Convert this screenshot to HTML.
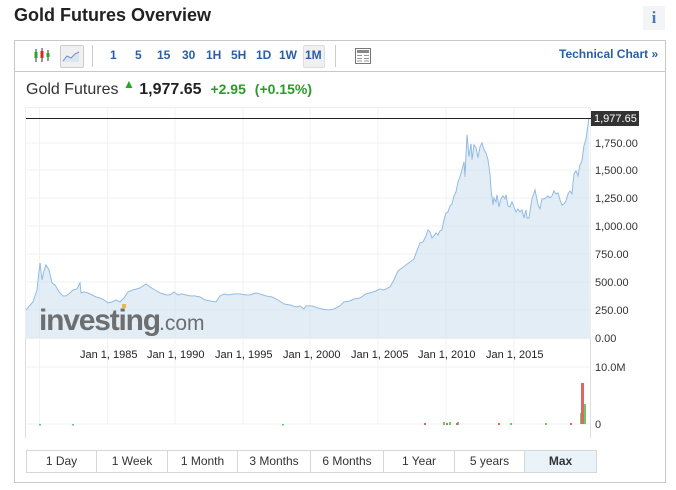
<!DOCTYPE html>
<html><head><meta charset="utf-8"><style>
body{margin:0;width:676px;height:490px;background:#fff;font-family:"Liberation Sans",Arial,sans-serif;position:relative;overflow:hidden}
.a{position:absolute}
h1{position:absolute;left:14px;top:5px;margin:0;font-size:18px;font-weight:bold;color:#222}
.info{left:643px;top:6px;width:22px;height:24px;background:#f2f4f6;color:#4a7ab8;font:bold 17px "Liberation Serif",serif;text-align:center;line-height:24px}
.box{left:14px;top:40px;width:650px;height:441px;border:1px solid #c8c8c8}
.tb{left:15px;top:41px;width:650px;height:30px;border-bottom:1px solid #c8c8c8}
.t{top:48px;font-size:12px;font-weight:bold;color:#2a5fa8}
.btns{left:26px;top:450px;display:flex;border:1px solid #d6d6d6}
.btns div{height:21px;line-height:21px;text-align:center;font-size:12px;color:#333;border-right:1px solid #d6d6d6}
.btns div:last-child{border-right:none}
</style></head><body>
<h1>Gold Futures Overview</h1>
<div class="a info">i</div>
<div class="a box"></div>
<div class="a tb"></div>
<svg class="a" style="left:33px;top:47px" width="18" height="18"><g stroke="#333" stroke-width="1"><line x1="3" y1="2" x2="3" y2="15"/><line x1="9" y1="1" x2="9" y2="15"/><line x1="15" y1="3" x2="15" y2="14"/></g><rect x="1.5" y="5" width="3" height="6" fill="#2a2" /><rect x="7.5" y="4" width="3" height="7" fill="#d22"/><rect x="13.5" y="6" width="3" height="4" fill="#2a2"/></svg>
<div class="a" style="left:60px;top:45px;width:22px;height:21px;background:#f0f0f0;border:1px solid #ccc;border-radius:2px"></div>
<svg class="a" style="left:62px;top:49px" width="18" height="14"><path d="M1 12 L5 7 L9 9 L13 5 L17 3 L17 13 L1 13Z" fill="#dbe6f3"/><path d="M1 12 L5 7 L9 9 L13 5 L17 3" stroke="#6b8fc4" fill="none"/></svg>
<div class="a" style="left:92px;top:45px;width:1px;height:22px;background:#ccc"></div>
<div class="a t" style="left:110px">1</div>
<div class="a t" style="left:135px">5</div>
<div class="a t" style="left:157px">15</div>
<div class="a t" style="left:182px">30</div>
<div class="a t" style="left:206px">1H</div>
<div class="a t" style="left:231px">5H</div>
<div class="a t" style="left:256px">1D</div>
<div class="a t" style="left:279px">1W</div>
<div class="a" style="left:303px;top:45px;width:20px;height:21px;background:#f0f0f0;border:1px solid #ddd;border-radius:2px"></div>
<div class="a t" style="left:305px">1M</div>
<div class="a" style="left:335px;top:45px;width:1px;height:22px;background:#ccc"></div>
<svg class="a" style="left:355px;top:48px" width="16" height="16"><rect x="0.5" y="0.5" width="15" height="15" fill="#fff" stroke="#777"/><rect x="2" y="2" width="12" height="3" fill="#888"/><g stroke="#999"><line x1="2" y1="7.5" x2="7" y2="7.5"/><line x1="2" y1="10.5" x2="7" y2="10.5"/><line x1="2" y1="13" x2="7" y2="13"/><line x1="9" y1="7.5" x2="14" y2="7.5"/><line x1="9" y1="10.5" x2="14" y2="10.5"/><line x1="9" y1="13" x2="14" y2="13"/></g></svg>
<div class="a" style="left:559px;top:47px;font-size:12px;font-weight:bold;color:#2a5fa8">Technical Chart »</div>
<div class="a" style="left:26px;top:81px;font-size:16px;color:#333;white-space:nowrap">Gold Futures <span style="color:#2a2;font-size:12px;position:relative;top:-6px">&#9650;</span> <b style="color:#222">1,977.65</b> &nbsp;<b style="color:#2a9a2a;font-size:14px">+2.95</b> &nbsp;<b style="color:#2a9a2a;font-size:14px">(+0.15%)</b></div>
<svg class="a" style="left:0;top:0" width="676" height="490">
<rect x="25.5" y="107.5" width="565" height="231" fill="#fff" stroke="#eee"/>
<g stroke="#f2f2f2"><line x1="39.5" y1="108" x2="39.5" y2="424"/><line x1="107.5" y1="108" x2="107.5" y2="424"/><line x1="175" y1="108" x2="175" y2="424"/><line x1="243" y1="108" x2="243" y2="424"/><line x1="310" y1="108" x2="310" y2="424"/><line x1="378" y1="108" x2="378" y2="424"/><line x1="446" y1="108" x2="446" y2="424"/><line x1="514" y1="108" x2="514" y2="424"/>
<line x1="26" y1="143" x2="590" y2="143"/><line x1="26" y1="170" x2="590" y2="170"/><line x1="26" y1="198" x2="590" y2="198"/><line x1="26" y1="226" x2="590" y2="226"/><line x1="26" y1="254" x2="590" y2="254"/><line x1="26" y1="282" x2="590" y2="282"/><line x1="26" y1="310" x2="590" y2="310"/><line x1="26" y1="367" x2="590" y2="367"/><line x1="26" y1="424" x2="590" y2="424"/></g>
<path id="p" d="M26,310 L33,302 L37,290 L40,263 L42,280 L44,271 L46,265 L49,270 L52,283 L55,285 L59,292 L63,296 L66,296 L70,293 L73,290 L77,289 L80,283 L81,293 L84,292 L88,293 L92,295 L96,297 L100,298 L104,300 L108,303 L112,302 L116,300 L120,302 L124,298 L128,292 L133,290 L140,288 L146,284 L150,287 L155,290 L160,293 L166,295 L170,295 L174,292 L178,295 L182,294 L186,295 L190,296 L195,296 L200,297 L205,300 L210,301 L216,302 L220,296 L224,294 L228,295 L234,294 L240,294 L246,295 L250,295 L256,293 L260,294 L266,296 L272,297 L278,300 L284,304 L290,305 L296,307 L300,306 L304,309 L306,306 L312,306 L318,308 L322,309 L328,310 L334,309 L340,306 L344,302 L350,301 L354,299 L360,298 L366,294 L370,293 L376,291 L380,289 L384,290 L390,287 L394,280 L398,271 L402,268 L406,265 L410,262 L414,259 L418,248 L420,243 L423,242 L426,236 L428,230 L430,232 L432,238 L434,236 L436,233 L438,235 L440,231 L442,230 L444,220 L446,213 L448,212 L450,206 L452,204 L454,196 L456,192 L458,182 L460,177 L462,170 L464,162 L465,177 L467,135 L469,157 L471,144 L472,160 L474,145 L476,148 L478,158 L480,147 L482,143 L484,150 L486,153 L488,160 L490,175 L491,190 L493,205 L494,198 L496,202 L497,195 L499,207 L501,199 L503,196 L505,199 L506,195 L508,206 L510,207 L512,202 L514,207 L516,212 L518,209 L520,212 L522,210 L524,218 L526,210 L527,218 L529,218 L532,199 L534,193 L535,190 L537,200 L538,205 L540,209 L542,199 L544,199 L546,198 L548,196 L550,198 L552,196 L554,191 L556,194 L558,193 L560,200 L562,205 L564,204 L566,201 L568,194 L570,191 L572,194 L574,174 L576,171 L578,176 L580,165 L582,161 L584,146 L586,139 L588,125 L589,118" fill="none" stroke="#7fb0e0" stroke-width="1"/>
<path d="M26,338 L26,310 L33,302 L37,290 L40,263 L42,280 L44,271 L46,265 L49,270 L52,283 L55,285 L59,292 L63,296 L66,296 L70,293 L73,290 L77,289 L80,283 L81,293 L84,292 L88,293 L92,295 L96,297 L100,298 L104,300 L108,303 L112,302 L116,300 L120,302 L124,298 L128,292 L133,290 L140,288 L146,284 L150,287 L155,290 L160,293 L166,295 L170,295 L174,292 L178,295 L182,294 L186,295 L190,296 L195,296 L200,297 L205,300 L210,301 L216,302 L220,296 L224,294 L228,295 L234,294 L240,294 L246,295 L250,295 L256,293 L260,294 L266,296 L272,297 L278,300 L284,304 L290,305 L296,307 L300,306 L304,309 L306,306 L312,306 L318,308 L322,309 L328,310 L334,309 L340,306 L344,302 L350,301 L354,299 L360,298 L366,294 L370,293 L376,291 L380,289 L384,290 L390,287 L394,280 L398,271 L402,268 L406,265 L410,262 L414,259 L418,248 L420,243 L423,242 L426,236 L428,230 L430,232 L432,238 L434,236 L436,233 L438,235 L440,231 L442,230 L444,220 L446,213 L448,212 L450,206 L452,204 L454,196 L456,192 L458,182 L460,177 L462,170 L464,162 L465,177 L467,135 L469,157 L471,144 L472,160 L474,145 L476,148 L478,158 L480,147 L482,143 L484,150 L486,153 L488,160 L490,175 L491,190 L493,205 L494,198 L496,202 L497,195 L499,207 L501,199 L503,196 L505,199 L506,195 L508,206 L510,207 L512,202 L514,207 L516,212 L518,209 L520,212 L522,210 L524,218 L526,210 L527,218 L529,218 L532,199 L534,193 L535,190 L537,200 L538,205 L540,209 L542,199 L544,199 L546,198 L548,196 L550,198 L552,196 L554,191 L556,194 L558,193 L560,200 L562,205 L564,204 L566,201 L568,194 L570,191 L572,194 L574,174 L576,171 L578,176 L580,165 L582,161 L584,146 L586,139 L588,125 L589,118 L590,338Z" fill="#c8dbee" fill-opacity="0.5"/>
<line x1="26" y1="118.5" x2="591" y2="118.5" stroke="#222" stroke-width="1"/>
<rect x="591" y="111" width="48" height="15" fill="#333"/>
<text x="594" y="122" font-size="11" fill="#fff" font-family="Liberation Sans">1,977.65</text>
<g font-size="11" fill="#333" font-family="Liberation Sans"><text x="595" y="147">1,750.00</text><text x="595" y="174">1,500.00</text><text x="595" y="202">1,250.00</text><text x="595" y="230">1,000.00</text><text x="595" y="258">750.00</text><text x="595" y="286">500.00</text><text x="595" y="314">250.00</text><text x="595" y="342">0.00</text><text x="595" y="371">10.0M</text><text x="595" y="428">0</text></g>
<line x1="590.5" y1="338" x2="590.5" y2="438" stroke="#ddd"/>
<line x1="25.5" y1="338" x2="25.5" y2="438" stroke="#ddd"/>
<g font-size="11" fill="#222" font-family="Liberation Sans"><text x="80" y="358">Jan 1, 1985</text><text x="147" y="358">Jan 1, 1990</text><text x="215" y="358">Jan 1, 1995</text><text x="283" y="358">Jan 1, 2000</text><text x="351" y="358">Jan 1, 2005</text><text x="418" y="358">Jan 1, 2010</text><text x="486" y="358">Jan 1, 2015</text></g>
<text x="39" y="330" font-size="30" font-weight="bold" fill="#6d6e70" font-family="Liberation Sans" letter-spacing="-1.2">investing</text>
<text x="159" y="330" font-size="21" fill="#6d6e70" font-family="Liberation Sans">.com</text>
<rect x="122" y="304" width="4" height="4" fill="#e8b84a"/>
<g fill="#6c6"><rect x="39" y="424" width="2" height="1.5"/><rect x="72" y="424" width="2" height="1.5"/><rect x="282" y="424" width="2" height="1.5"/><rect x="443" y="422" width="2" height="3"/><rect x="449" y="422" width="2" height="3"/><rect x="457" y="422" width="2" height="3"/><rect x="510" y="423" width="2" height="2"/><rect x="545" y="423" width="2" height="2"/><rect x="580" y="413" width="2" height="11"/><rect x="584" y="404" width="2" height="20"/></g>
<g fill="#d66"><rect x="424" y="423" width="2" height="2"/><rect x="446" y="423" width="2" height="2"/><rect x="456" y="423" width="2" height="2"/><rect x="498" y="423" width="2" height="2"/><rect x="570" y="423" width="2" height="2"/><rect x="581" y="383" width="3" height="41"/></g>
</svg>
<div class="a btns">
<div style="width:69px">1 Day</div><div style="width:70px">1 Week</div><div style="width:69px">1 Month</div><div style="width:72px">3 Months</div><div style="width:72px">6 Months</div><div style="width:70px">1 Year</div><div style="width:69px">5 years</div><div style="width:71px;background:#eaf2fa;font-weight:bold">Max</div>
</div>
</body></html>
